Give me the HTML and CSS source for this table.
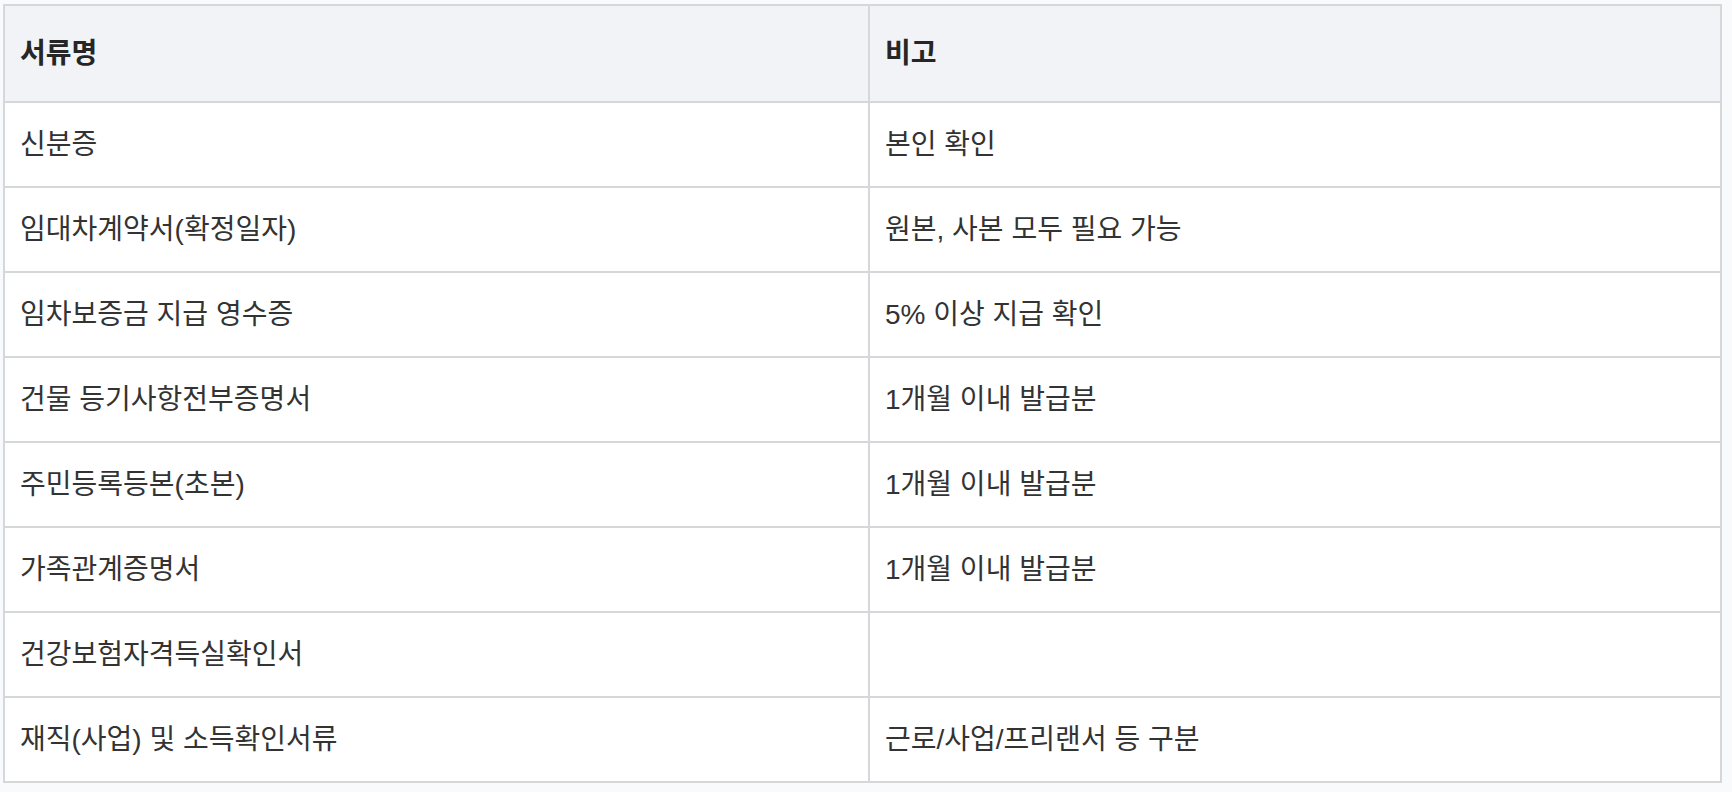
FILE: index.html
```html
<!DOCTYPE html>
<html lang="ko">
<head>
<meta charset="utf-8">
<title>서류 목록</title>
<link rel="stylesheet" href="styles.css">
</head>
<body>
<div class="wrap">
<table class="docs">
<colgroup><col class="c-name"><col class="c-note"></colgroup>
<thead>
<tr><th>서류명</th><th>비고</th></tr>
</thead>
<tbody>
<tr><td>신분증</td><td>본인 확인</td></tr>
<tr><td>임대차계약서(확정일자)</td><td>원본, 사본 모두 필요 가능</td></tr>
<tr><td>임차보증금 지급 영수증</td><td>5% 이상 지급 확인</td></tr>
<tr><td>건물 등기사항전부증명서</td><td>1개월 이내 발급분</td></tr>
<tr><td>주민등록등본(초본)</td><td>1개월 이내 발급분</td></tr>
<tr><td>가족관계증명서</td><td>1개월 이내 발급분</td></tr>
<tr><td>건강보험자격득실확인서</td><td></td></tr>
<tr><td>재직(사업) 및 소득확인서류</td><td>근로/사업/프리랜서 등 구분</td></tr>
</tbody>
</table>
</div>
</body>
</html>
```
FILE: styles.css
```css
html, body {
  margin: 0;
  padding: 0;
  background: #f9fafc;
}
body {
  font-family: "Liberation Sans", "Noto Sans CJK KR", sans-serif;
  color: #333;
}
.wrap {
  padding: 4px 10px 9px 3px;
}
.docs {
  width: 100%;
  border-collapse: collapse;
  border: 2px solid #d6d7db;
  background: #fff;
  font-size: 28px;
  line-height: 37px;
  table-layout: fixed;
}
.c-name { width: 865px; }
.c-note { width: auto; }
.docs th, .docs td {
  border: 2px solid #d6d7db;
  text-align: left;
  vertical-align: middle;
  padding: 23px 15px;
}
.docs th {
  background: #f2f3f7;
  font-weight: 700;
  color: #262626;
  padding: 29px 15px 29px;
}
```
